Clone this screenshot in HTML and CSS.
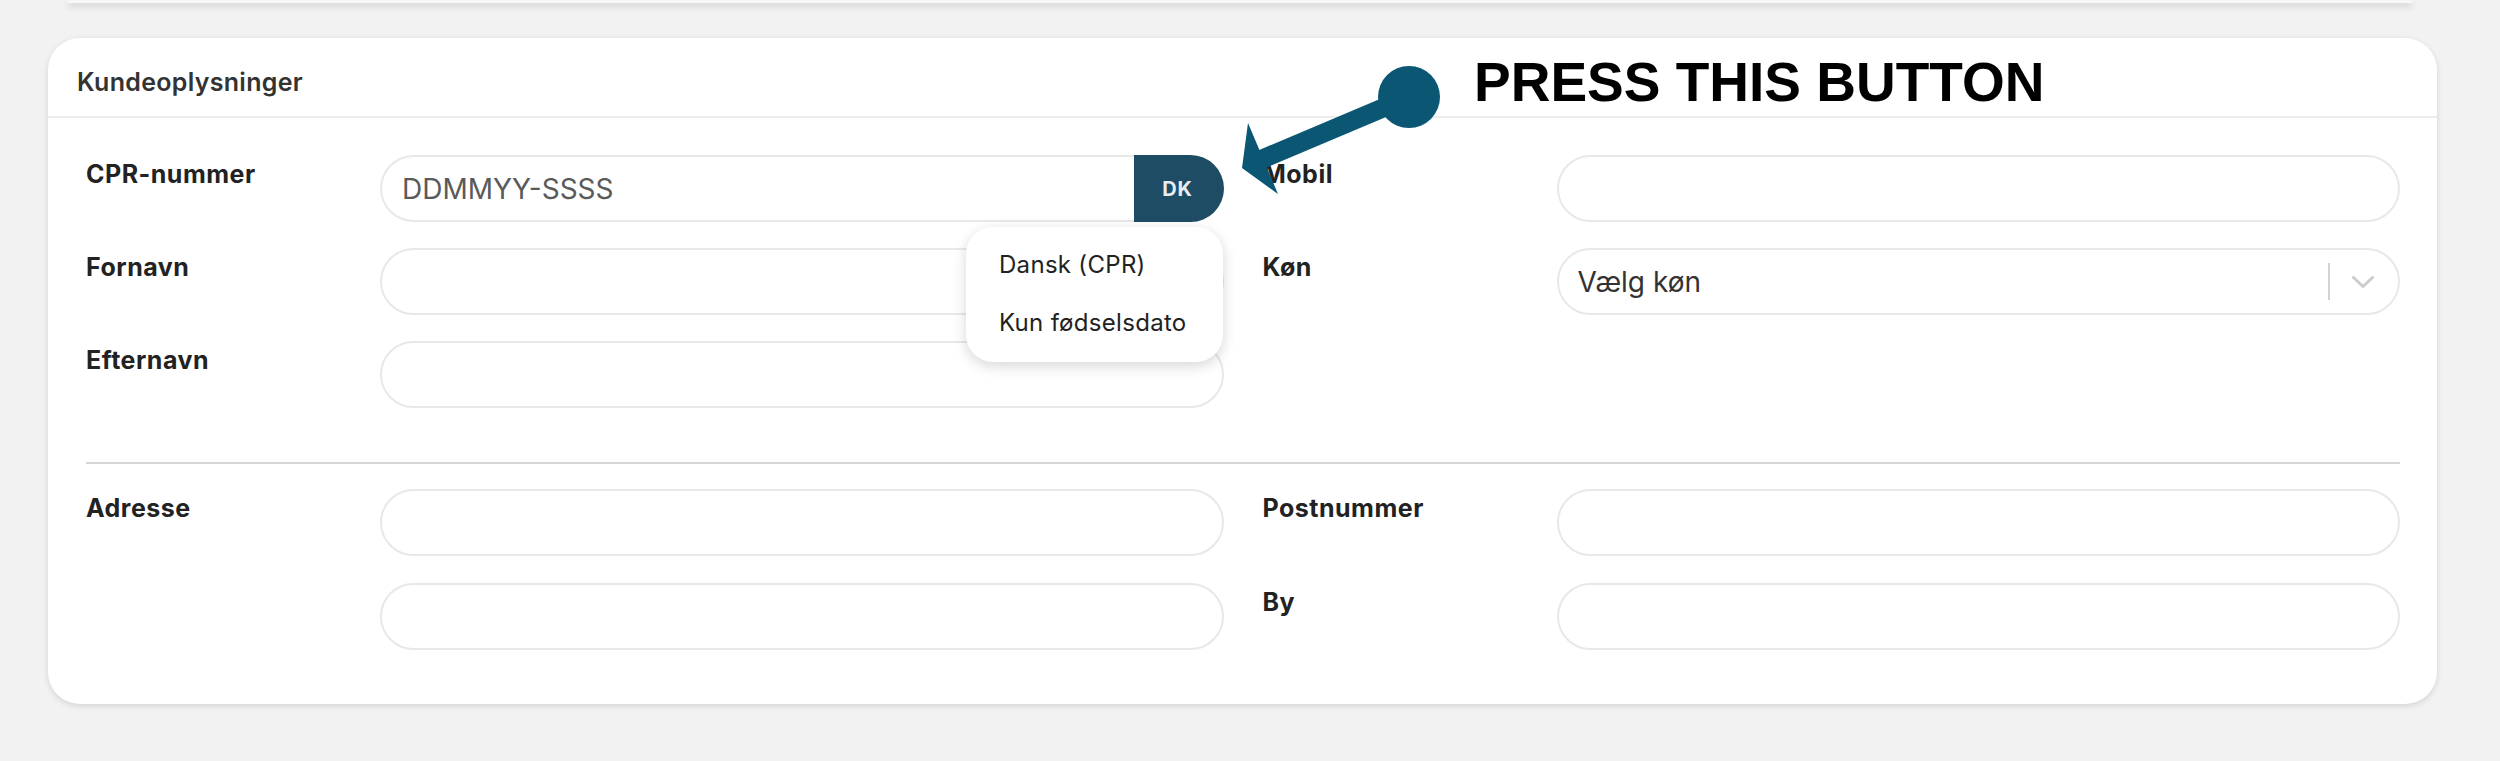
FILE: index.html
```html
<!DOCTYPE html>
<html lang="da">
<head>
<meta charset="utf-8">
<title>Kundeoplysninger</title>
<link rel="stylesheet" href="styles.css">
</head>
<body>
  <div class="prev-card"></div>

  <section class="card">
    <header class="card-header">Kundeoplysninger</header>
    <div class="card-body">
      <div class="section-grid">
        <div class="col">
          <div class="field">
            <label class="label">CPR-nummer</label>
            <div class="input-group">
              <div class="input input-left"><span class="placeholder">DDMMYY-SSSS</span></div>
              <button class="dk-btn">DK</button>
              <div class="menu">
                <div class="menu-item">Dansk (CPR)</div>
                <div class="menu-item">Kun fødselsdato</div>
              </div>
            </div>
          </div>
          <div class="field">
            <label class="label">Fornavn</label>
            <div class="input"></div>
          </div>
          <div class="field">
            <label class="label">Efternavn</label>
            <div class="input"></div>
          </div>
        </div>
        <div class="col">
          <div class="field">
            <label class="label">Mobil</label>
            <div class="input"></div>
          </div>
          <div class="field">
            <label class="label">Køn</label>
            <div class="input select">
              <span class="select-value">Vælg køn</span>
              <span class="select-sep"></span>
              <svg class="chevron" width="22" height="13" viewBox="0 0 22 13"><polyline points="1.5,1.5 11,10.5 20.5,1.5" fill="none" stroke="#cccccc" stroke-width="3" stroke-linecap="round" stroke-linejoin="round"/></svg>
            </div>
          </div>
        </div>
      </div>

      <div class="divider"></div>

      <div class="section-grid section-bottom">
        <div class="col">
          <div class="field">
            <label class="label">Adresse</label>
            <div class="input"></div>
          </div>
          <div class="field">
            <label class="label"></label>
            <div class="input"></div>
          </div>
        </div>
        <div class="col">
          <div class="field">
            <label class="label">Postnummer</label>
            <div class="input"></div>
          </div>
          <div class="field">
            <label class="label">By</label>
            <div class="input"></div>
          </div>
        </div>
      </div>
    </div>
  </section>

  <svg class="arrow" width="220" height="150" viewBox="0 0 220 150">
    <line x1="179" y1="42" x2="30" y2="105" stroke="#0a5673" stroke-width="19"/>
    <polygon points="12,113 18,68 48,139" fill="#0a5673"/>
    <circle cx="179" cy="42" r="31" fill="#0a5673"/>
  </svg>
  <div class="callout">PRESS THIS BUTTON</div>
</body>
</html>
```

FILE: styles.css
```css
* { box-sizing: border-box; }

html, body {
  margin: 0;
  padding: 0;
}

body {
  position: relative;
  width: 2500px;
  height: 761px;
  overflow: hidden;
  background: #f2f2f2;
  font-family: Inter, "Noto Sans", "Liberation Sans", sans-serif;
  color: #222;
}

.prev-card {
  height: 3px;
  margin: 0 87px 0 67px;
  background: #f7f7f7;
  border-radius: 0 0 14px 14px;
  box-shadow: 0 3px 6px rgba(0, 0, 0, 0.2);
}

.card {
  margin: 35px 63px 0 48px;
  background: #ffffff;
  border-radius: 32px;
  box-shadow: 0 2px 6px rgba(0, 0, 0, 0.13);
}

.card-header {
  height: 80px;
  padding: 30px 29px 0;
  border-bottom: 2px solid #ececec;
  font-size: 25px;
  line-height: 29px;
  font-weight: 600;
  letter-spacing: 0.3px;
  color: #333;
}

.card-body {
  padding: 37px 37px 54px 38px;
}

.section-grid {
  display: grid;
  grid-template-columns: 1fr 1fr;
  column-gap: 39px;
}

.col {
  display: flex;
  flex-direction: column;
  gap: 26px;
}

.section-bottom .col {
  gap: 27px;
}

.field {
  display: flex;
  align-items: flex-start;
}

.label {
  flex: 0 0 294px;
  padding-top: 5px;
  font-size: 25px;
  line-height: 29px;
  font-weight: 700;
  letter-spacing: 0.5px;
  color: #222;
}

.input {
  flex: 1;
  height: 67px;
  border: 2px solid #e8e8e8;
  border-radius: 34px;
  background: #fff;
  display: flex;
  align-items: center;
  padding: 0 20px;
  font-size: 28px;
}

.input-group {
  flex: 1;
  display: flex;
  position: relative;
}

.input-left {
  border-right: none;
  border-radius: 34px 0 0 34px;
}

.placeholder {
  color: #5a5a5a;
}

.dk-btn {
  flex: 0 0 90px;
  height: 67px;
  border: none;
  border-radius: 0 34px 34px 0;
  background: #1e4c65;
  color: #e6edf1;
  font-family: Inter, "Noto Sans", "Liberation Sans", sans-serif;
  font-size: 20px;
  font-weight: 700;
  letter-spacing: 0.8px;
  padding: 0 2px 0 0;
}

.menu {
  position: absolute;
  left: 586px;
  top: 72px;
  width: 257px;
  padding: 9px 0 10px;
  background: #fff;
  border-radius: 27px;
  box-shadow: 0 4px 14px rgba(0, 0, 0, 0.16);
  z-index: 5;
}

.menu-item {
  height: 58px;
  line-height: 58px;
  padding-left: 33px;
  font-size: 24px;
  letter-spacing: 0.3px;
  color: #222;
  white-space: nowrap;
}

.select {
  padding: 0 24px 0 19px;
}

.select-value {
  flex: 1;
  color: #333;
}

.select-sep {
  width: 2px;
  height: 37px;
  background: #d2d2d2;
  margin-right: 22px;
}

.chevron {
  display: block;
  margin-top: 2px;
}

.divider {
  height: 2px;
  background: #d6d6d6;
  margin: 54px 0 25px;
}

.arrow {
  position: absolute;
  left: 1230px;
  top: 55px;
  z-index: 10;
}

.callout {
  position: absolute;
  left: 1474px;
  top: 55px;
  font-family: "Liberation Sans", Arial, sans-serif;
  font-weight: 700;
  font-size: 55px;
  line-height: 55px;
  color: #000;
  white-space: nowrap;
  z-index: 10;
}
```
